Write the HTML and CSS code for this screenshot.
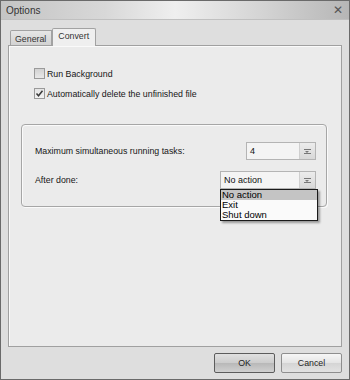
FILE: index.html
```html
<!DOCTYPE html>
<html lang="en">

<head>
    <meta charset="UTF-8">
    <title>Options</title>
    <link rel="stylesheet" href="styles.css">
</head>

<body>
    <div class="window">
        <div class="titlebar">
            <span class="title">Options</span>
            <span class="close">&#x2715;</span>
        </div>

        <div class="client">
            <div class="tabs">
                <div class="tab">General</div>
                <div class="tab active">Convert</div>
            </div>

            <div class="panel">
                <label class="check">
                    <span class="box"></span>
                    Run Background
                </label>
                <label class="check">
                    <span class="box checked">
                        <svg width="9" height="9" viewBox="0 0 9 9">
                            <path d="M1.5 4.5 L3.5 6.8 L7.5 1.8" fill="none" stroke="#3a3a3a" stroke-width="1.5" />
                        </svg>
                    </span>
                    Automatically delete the unfinished file
                </label>

                <div class="group">
                    <div class="row">
                        <span>Maximum simultaneous running tasks:</span>
                        <div class="combo small">
                            <span class="value">4</span>
                            <span class="arrow"><i></i></span>
                        </div>
                    </div>
                    <div class="row">
                        <span>After done:</span>
                        <div class="combo wide">
                            <span class="value">No action</span>
                            <span class="arrow"><i></i></span>
                            <ul class="droplist">
                                <li class="selected">No action</li>
                                <li>Exit</li>
                                <li>Shut down</li>
                            </ul>
                        </div>
                    </div>
                </div>
            </div>

            <div class="footer">
                <button class="btn default">OK</button>
                <button class="btn">Cancel</button>
            </div>
        </div>
    </div>
</body>

</html>
```

FILE: styles.css
```css
* {
    margin: 0;
    padding: 0;
    box-sizing: border-box;
}

body {
    font-family: "Liberation Sans", Arial, sans-serif;
    font-size: 8.8px;
    color: #161616;
    background: #dcdcdc;
}

.window {
    width: 350px;
    height: 380px;
    border: 1px solid #6a6a6a;
    background: #dedede;
    display: flex;
    flex-direction: column;
}

.titlebar {
    height: 22px;
    display: flex;
    align-items: center;
    justify-content: space-between;
    padding: 0 6px 0 5px;
    background: linear-gradient(to right, #c4c4c4, #d8d8d8 30%, #efefef 50%, #d4d4d4 75%, #b6b6b6);
    border-bottom: 1px solid #c0c0c0;
}

.title {
    font-size: 10px;
    color: #333;
}

.close {
    font-family: "DejaVu Sans", sans-serif;
    font-size: 12px;
    color: #555;
}

.client {
    flex: 1;
    display: flex;
    flex-direction: column;
    padding: 7px 7px 6px 7px;
}

.tabs {
    display: flex;
    align-items: flex-end;
    height: 18px;
    padding-left: 2px;
}

.tab {
    height: 15px;
    padding: 3px 5px 0 4px;
    border: 1px solid #a2a2a2;
    border-bottom: none;
    border-radius: 2px 0 0 0;
    background: linear-gradient(#e6e6e6, #d2d2d2);
    color: #333;
}

.tab.active {
    height: 18px;
    padding: 2px 6px 0 5px;
    border-radius: 2px 2px 0 0;
    background: #efefef;
    margin-bottom: -1px;
    position: relative;
    z-index: 1;
}

.panel {
    height: 302px;
    border: 1px solid #a0a0a0;
    background: #ebebeb;
    padding: 22px 0 0 25px;
    box-shadow: inset 1px 1px 0 #fafafa;
}

.check {
    display: flex;
    align-items: center;
    gap: 2px;
    height: 11px;
    margin-bottom: 9px;
}

.box {
    width: 11px;
    height: 11px;
    border: 1px solid #9a9a9a;
    background: linear-gradient(#d2d2d2, #e8e8e8);
    display: flex;
    align-items: center;
    justify-content: center;
}

.box.checked {
    background: linear-gradient(#e4e4e4, #f2f2f2);
}

.group {
    position: relative;
    margin: 25px 0 0 -13px;
    width: 306px;
    height: 83px;
    border: 1px solid #a6a6a6;
    border-radius: 4px;
    box-shadow: 1px 1px 0 #fafafa, inset 1px 1px 0 #fafafa;
    padding: 17px 10px 0 13px;
}

.row {
    display: flex;
    align-items: center;
    justify-content: space-between;
    height: 18px;
    margin-bottom: 11px;
}

.combo {
    position: relative;
    height: 18px;
    display: flex;
    border: 1px solid #b4b4b4;
    background: #f4f4f4;
}

.combo.small {
    width: 70px;
}

.combo.wide {
    width: 96px;
}

.combo .value {
    flex: 1;
    padding: 3px 0 0 3px;
    color: #111;
    font-size: 9px;
}

.arrow {
    width: 16px;
    border-left: 1px solid #cfcfcf;
    background: linear-gradient(#ececec, #d8d8d8);
    display: flex;
    align-items: center;
    justify-content: center;
}

.arrow i {
    width: 7px;
    height: 5px;
    border-top: 1px solid #777;
    border-bottom: 1px solid #777;
    position: relative;
}

.arrow i::after {
    content: "";
    position: absolute;
    left: 1px;
    top: 1px;
    border-left: 2.5px solid transparent;
    border-right: 2.5px solid transparent;
    border-top: 2px solid #777;
}

.droplist {
    position: absolute;
    left: -1px;
    top: 17px;
    width: 98px;
    list-style: none;
    border: 1px solid #1a1a1a;
    background: #fafafa;
    box-shadow: 2px 2px 2px rgba(0, 0, 0, 0.35);
    font-size: 9.5px;
    color: #000;
    z-index: 2;
}

.droplist li {
    height: 10px;
    line-height: 10px;
    padding-left: 1px;
}

.droplist li.selected {
    background: #c4c4c4;
}

.footer {
    display: flex;
    justify-content: flex-end;
    gap: 6px;
    padding-top: 6px;
}

.btn {
    width: 61px;
    height: 20px;
    font-family: inherit;
    font-size: 8.8px;
    color: #1e1e1e;
    border: 1px solid #8e8e8e;
    border-radius: 2px;
    background: linear-gradient(#f6f6f6, #e4e4e4 50%, #d4d4d4 51%, #e2e2e2);
}

.btn.default {
    border-color: #5c5c5c;
    background: linear-gradient(#e0e0e0, #cccccc 50%, #b8b8b8 51%, #d0d0d0);
}
```
